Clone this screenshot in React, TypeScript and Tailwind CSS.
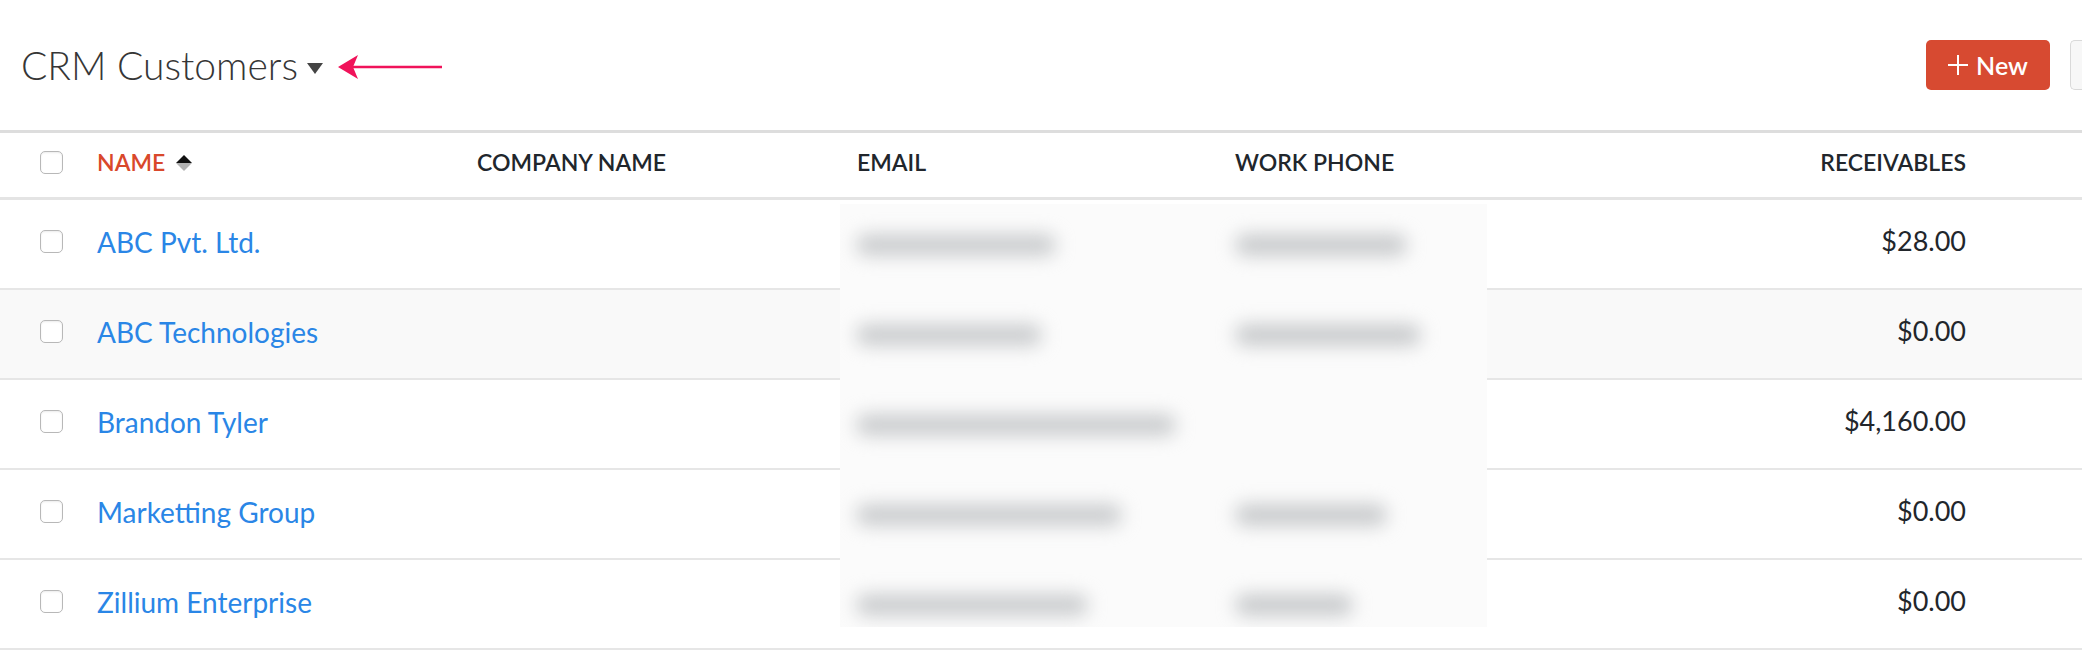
import React from "react";

type Row = {
  name: string;
  amount: string;
  email: number;
  phone: number;
  hover?: boolean;
};

const rows: Row[] = [
  { name: "ABC Pvt. Ltd.", amount: "$28.00", email: 200, phone: 172 },
  { name: "ABC Technologies", amount: "$0.00", email: 186, phone: 186, hover: true },
  { name: "Brandon Tyler", amount: "$4,160.00", email: 320, phone: 0 },
  { name: "Marketting Group", amount: "$0.00", email: 266, phone: 152 },
  { name: "Zillium Enterprise", amount: "$0.00", email: 232, phone: 118 },
];

function Checkbox() {
  return (
    <div className="w-[23px] h-[23px] rounded-[5px] border-[1.5px] border-[#b8b8b8] bg-white shadow-[inset_0_1px_2px_rgba(0,0,0,0.08)] shrink-0" />
  );
}

function SortIcon() {
  return (
    <svg width="16" height="16" viewBox="0 0 16 16" className="ml-[11px]">
      <polygon points="8,0 16,8 0,8" fill="#111" />
      <polygon points="0,8 16,8 8,16" fill="#b3b3b3" />
    </svg>
  );
}

export default function App() {
  return (
    <div
      className="relative w-[2082px] h-[672px] bg-white overflow-hidden"
      style={{ fontFamily: "Lato, 'Open Sans', sans-serif" }}
    >
      {/* Top bar */}
      <div className="h-[130px] flex items-center pl-[21px] pr-0">
        <div className="flex items-center">
          <span className="text-[39px] font-light text-[#363636] tracking-[0px] leading-none">
            CRM Customers
          </span>
          <svg width="16" height="11" viewBox="0 0 16 11" className="ml-[9px] mt-[6px]">
            <polygon points="0,0 16,0 8,11" fill="#444" />
          </svg>
          <svg width="106" height="26" viewBox="0 0 106 26" className="ml-[15px] mt-[4px]">
            <line x1="14" y1="13" x2="104" y2="13" stroke="#f0135a" strokeWidth="2.5" />
            <path d="M0 13 L20 1 L15 13 L20 25 Z" fill="#f0135a" />
          </svg>
        </div>
        <div className="ml-auto flex items-center gap-[20px] mr-[-20px]">
          <button className="h-[50px] w-[124px] rounded-[5px] bg-[#d74a31] text-white flex items-center justify-center gap-[8px]">
            <svg width="20" height="20" viewBox="0 0 20 20">
              <line x1="10" y1="0" x2="10" y2="20" stroke="white" strokeWidth="2" />
              <line x1="0" y1="10" x2="20" y2="10" stroke="white" strokeWidth="2" />
            </svg>
            <span className="text-[25px] font-semibold leading-none">New</span>
          </button>
          <div className="h-[50px] w-[32px] rounded-l-[5px] border-[1.5px] border-r-0 border-[#d9d9d9] bg-[#f7f7f7]" />
        </div>
      </div>

      {/* Table */}
      <div className="border-t-[3px] border-[#dddddd]">
        {/* header */}
        <div className="h-[67px] flex items-center pl-[40px] pr-[116px] pb-[5px] border-b-[3px] border-[#e4e4e4] text-[23px] font-semibold text-[#21262c]">
          <Checkbox />
          <div className="w-[380px] ml-[34px] flex items-center">
            <span className="text-[#d9482b]">NAME</span>
            <SortIcon />
          </div>
          <div className="w-[380px]">COMPANY NAME</div>
          <div className="w-[378px]">EMAIL</div>
          <div className="w-[300px]">WORK PHONE</div>
          <div className="flex-1 text-right">RECEIVABLES</div>
        </div>

        {rows.map((r) => (
          <div
            key={r.name}
            className={`h-[90px] flex items-center pl-[40px] pr-[116px] pb-[5px] border-b-2 border-[#e6e6e6] ${
              r.hover ? "bg-[#f9f9f9]" : "bg-white"
            }`}
          >
            <Checkbox />
            <div className="w-[380px] ml-[34px] text-[28px] text-[#2a86e6]">{r.name}</div>
            <div className="w-[380px]" />
            <div className="w-[378px]" />
            <div className="w-[300px]" />
            <div className="flex-1 text-right text-[27px] text-[#22262b]">{r.amount}</div>
          </div>
        ))}
      </div>

      {/* Privacy blur overlay over email & phone columns */}
      <div className="absolute left-[840px] top-[204px] w-[647px] h-[423px] bg-[#fbfbfb] overflow-hidden">
        <div className="-mt-[4px] flex flex-col">
          {rows.map((r) => (
            <div key={r.name} className="h-[90px] flex items-center">
              <div className="w-[389px] pl-[16px]">
                <div
                  className="h-[22px] rounded-full bg-[#cbcdcf] blur-[9px]"
                  style={{ width: r.email }}
                />
              </div>
              {r.phone > 0 && (
                <div className="pl-[6px]">
                  <div
                    className="h-[22px] rounded-full bg-[#c9cbcd] blur-[9px]"
                    style={{ width: r.phone }}
                  />
                </div>
              )}
            </div>
          ))}
        </div>
      </div>
    </div>
  );
}
